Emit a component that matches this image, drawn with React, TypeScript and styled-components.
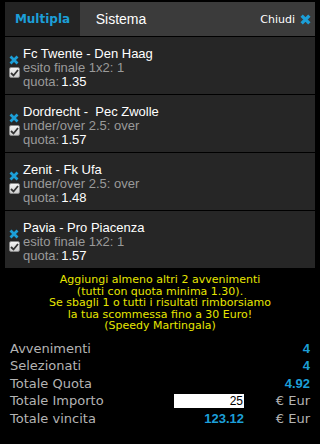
import styled, { createGlobalStyle } from "styled-components";

const GlobalStyle = createGlobalStyle`
  html, body {
    margin: 0;
    padding: 0;
    background: #000;
  }
`;

const BLUE = "#1c9fd8";

const Page = styled.div`
  width: 320px;
  height: 444px;
  background: #000;
  padding-top: 2px;
  box-sizing: border-box;
  font-family: "Liberation Sans", Arial, sans-serif;
`;

const Panel = styled.div`
  margin-left: 5px;
  width: 310px;
  background: #262626;
`;

const TabBar = styled.div`
  display: flex;
  align-items: stretch;
  height: 34px;
  background: #3b3b3b;
  border-bottom: 1px solid #000;
`;

const Tab = styled.div<{ $active?: boolean }>`
  display: flex;
  align-items: center;
  justify-content: center;
  width: ${(p) => (p.$active ? "75px" : "82px")};
  background: ${(p) => (p.$active ? "#232323" : "transparent")};
  color: ${(p) => (p.$active ? BLUE : "#fff")};
  font-family: ${(p) =>
    p.$active ? '"DejaVu Sans", Verdana, sans-serif' : '"Liberation Sans", Arial, sans-serif'};
  font-weight: ${(p) => (p.$active ? "bold" : "normal")};
  font-size: ${(p) => (p.$active ? "12px" : "14px")};
`;

const CloseButton = styled.div`
  margin-left: auto;
  display: flex;
  align-items: center;
  gap: 5px;
  padding-right: 4px;
  color: #fff;
  font-family: "DejaVu Sans", Verdana, sans-serif;
  font-size: 11px;
`;

const BetRow = styled.div`
  display: flex;
  height: 58px;
  box-sizing: border-box;
  padding: 10px 0 0 3px;
  gap: 3px;
  border-bottom: 1px solid #000;
`;

const IconColumn = styled.div`
  display: flex;
  flex-direction: column;
  align-items: center;
  width: 12px;
  padding-top: 8px;
  gap: 2px;
`;

const CheckBox = styled.div`
  width: 11px;
  height: 11px;
  box-sizing: border-box;
  background: linear-gradient(#f4f4f4, #cfcfcf);
  border: 1px solid #8a8a8a;
  border-radius: 2px;
  display: flex;
  align-items: center;
  justify-content: center;
`;

const BetText = styled.div`
  display: flex;
  flex-direction: column;
  font-size: 13px;
  line-height: 14px;
  white-space: pre;
`;

const Match = styled.span`
  color: #fff;
`;

const Market = styled.span`
  color: #9a9a9a;
`;

const Odds = styled.span`
  color: #9a9a9a;
  b {
    color: #fff;
    font-weight: normal;
    margin-left: 2px;
  }
`;

const Promo = styled.div`
  padding-top: 5px;
  text-align: center;
  color: #e6e600;
  font-family: "DejaVu Sans", Verdana, sans-serif;
  font-size: 11px;
  line-height: 11.5px;
`;

const Summary = styled.div`
  display: grid;
  grid-template-columns: 1fr 80px 66px;
  margin: 8px 10px 0 10px;
  grid-auto-rows: 17.5px;
  align-items: center;
  font-family: "DejaVu Sans", Verdana, sans-serif;
  font-size: 13px;
  color: #b4b4b4;
`;

const Label = styled.span<{ $wide?: boolean }>`
  grid-column: ${(p) => (p.$wide ? "1 / 3" : "auto")};
`;

const Value = styled.span`
  text-align: right;
  color: ${BLUE};
  font-weight: bold;
  font-family: "Liberation Sans", Arial, sans-serif;
  font-size: 13px;
`;

const Currency = styled.span`
  text-align: right;
`;

const AmountInput = styled.input`
  justify-self: end;
  width: 70px;
  height: 14px;
  box-sizing: border-box;
  border: none;
  outline: none;
  padding: 0 1px 0 0;
  margin: 0;
  background: #fff;
  color: #000;
  text-align: right;
  font-family: "Liberation Sans", Arial, sans-serif;
  font-size: 12px;
`;

function XIcon({ size = 10, stroke = 2.8 }: { size?: number; stroke?: number }) {
  return (
    <svg width={size} height={size} viewBox="0 0 10 10">
      <path d="M1.5 1.5 L8.5 8.5 M8.5 1.5 L1.5 8.5" stroke={BLUE} strokeWidth={stroke} strokeLinecap="butt" />
    </svg>
  );
}

function Tick() {
  return (
    <svg width="9" height="8" viewBox="0 0 9 8">
      <path d="M1 4 L3.5 6.5 L8 1" stroke="#333" strokeWidth="1.8" fill="none" />
    </svg>
  );
}

const bets = [
  { match: "Fc Twente - Den Haag", market: "esito finale 1x2: 1", odds: "1.35" },
  { match: "Dordrecht -  Pec Zwolle", market: "under/over 2.5: over", odds: "1.57" },
  { match: "Zenit - Fk Ufa", market: "under/over 2.5: over", odds: "1.48" },
  { match: "Pavia - Pro Piacenza", market: "esito finale 1x2: 1", odds: "1.57" },
];

export default function App() {
  return (
    <Page>
      <GlobalStyle />
      <Panel>
        <TabBar>
          <Tab $active>Multipla</Tab>
          <Tab>Sistema</Tab>
          <CloseButton>
            Chiudi
            <XIcon size={11} stroke={3} />
          </CloseButton>
        </TabBar>
        {bets.map((bet, i) => (
          <BetRow key={i}>
            <IconColumn>
              <XIcon />
              <CheckBox>
                <Tick />
              </CheckBox>
            </IconColumn>
            <BetText>
              <Match>{bet.match}</Match>
              <Market>{bet.market}</Market>
              <Odds>
                quota:<b>{bet.odds}</b>
              </Odds>
            </BetText>
          </BetRow>
        ))}
      </Panel>
      <Promo>
        Aggiungi almeno altri 2 avvenimenti
        <br />
        (tutti con quota minima 1.30).
        <br />
        Se sbagli 1 o tutti i risultati rimborsiamo
        <br />
        la tua scommessa fino a 30 Euro!
        <br />
        (Speedy Martingala)
      </Promo>
      <Summary>
        <Label $wide>Avvenimenti</Label>
        <Value>4</Value>
        <Label $wide>Selezionati</Label>
        <Value>4</Value>
        <Label $wide>Totale Quota</Label>
        <Value>4.92</Value>
        <Label>Totale Importo</Label>
        <AmountInput defaultValue="25" />
        <Currency>€ Eur</Currency>
        <Label>Totale vincita</Label>
        <Value>123.12</Value>
        <Currency>€ Eur</Currency>
      </Summary>
    </Page>
  );
}
